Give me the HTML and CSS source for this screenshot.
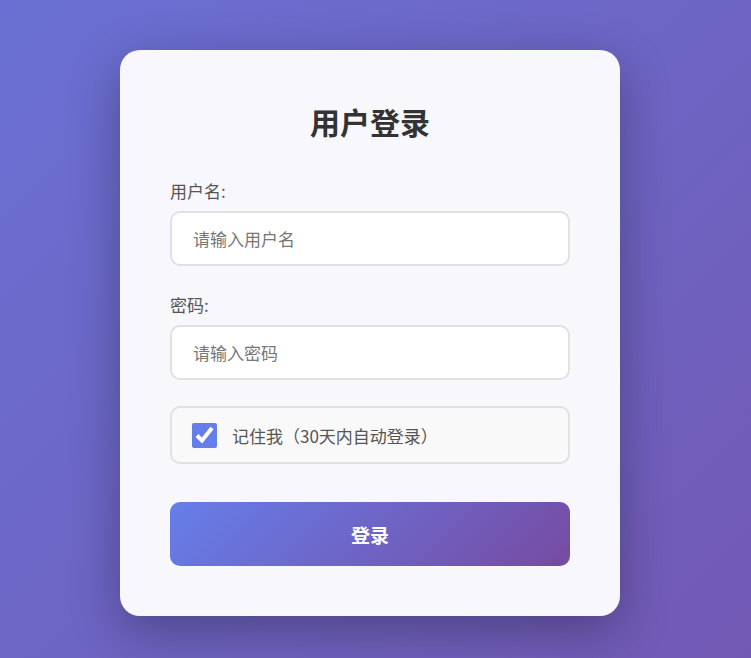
FILE: index.html
```html
<!DOCTYPE html>
<html lang="zh-CN">
<head>
    <meta charset="UTF-8">
    <meta name="viewport" content="width=device-width, initial-scale=1.0">
    <title>用户登录</title>
    <link rel="stylesheet" href="styles.css">
</head>
<body>
    <div class="login-box">
        <h2>用户登录</h2>

        <div class="form-group">
            <label for="username">用户名:</label>
            <input type="text" id="username" placeholder="请输入用户名">
        </div>

        <div class="form-group">
            <label for="password">密码:</label>
            <input type="password" id="password" placeholder="请输入密码">
        </div>

        <div class="remember">
            <input type="checkbox" id="remember" checked>
            <label for="remember">记住我（30天内自动登录）</label>
        </div>

        <button type="button">登录</button>
    </div>
</body>
</html>
```

FILE: styles.css
```css
* {
    box-sizing: border-box;
}

html, body {
    height: 100%;
}

body {
    margin: 0;
    padding: 50px 11px 0 0;
    font-family: "Noto Sans CJK SC", "Noto Sans", sans-serif;
    font-size: 17px;
    background: linear-gradient(135deg, #6a70d3 0%, #6d65c4 50%, #7259b4 100%);
    background-attachment: fixed;
}

.login-box {
    width: 500px;
    margin: 0 auto;
    padding: 50px;
    background: rgba(255, 255, 255, 0.95);
    border-radius: 20px;
    box-shadow: 0 15px 50px rgba(0, 0, 0, 0.3);
}

h2 {
    margin: 0 0 35px;
    text-align: center;
    font-size: 30px;
    line-height: 43px;
    color: #333;
}

.form-group {
    margin-bottom: 26px;
}

.form-group label {
    display: block;
    margin-bottom: 8px;
    color: #555;
    line-height: 25px;
}

.form-group input {
    display: block;
    width: 100%;
    height: 55px;
    padding: 0 21px;
    border: 2px solid #e1e1e1;
    border-radius: 10px;
    background: #fff;
    font-family: inherit;
    font-size: 17px;
    color: #333;
    outline: none;
}

.form-group input::placeholder {
    color: #777;
}

.remember {
    display: flex;
    align-items: center;
    gap: 15px;
    height: 58px;
    padding: 0 20px;
    background: #f9f9f9;
    border: 2px solid #e1e1e1;
    border-radius: 10px;
    margin-bottom: 38px;
}

.remember input {
    width: 25px;
    height: 25px;
    margin: 0;
    accent-color: #667eea;
}

.remember label {
    color: #555;
}

button {
    display: block;
    width: 100%;
    height: 64px;
    border: none;
    border-radius: 10px;
    background: linear-gradient(135deg, #667eea 0%, #764ba2 100%);
    color: #fff;
    font-family: inherit;
    font-size: 19px;
    font-weight: bold;
    cursor: pointer;
}
```
